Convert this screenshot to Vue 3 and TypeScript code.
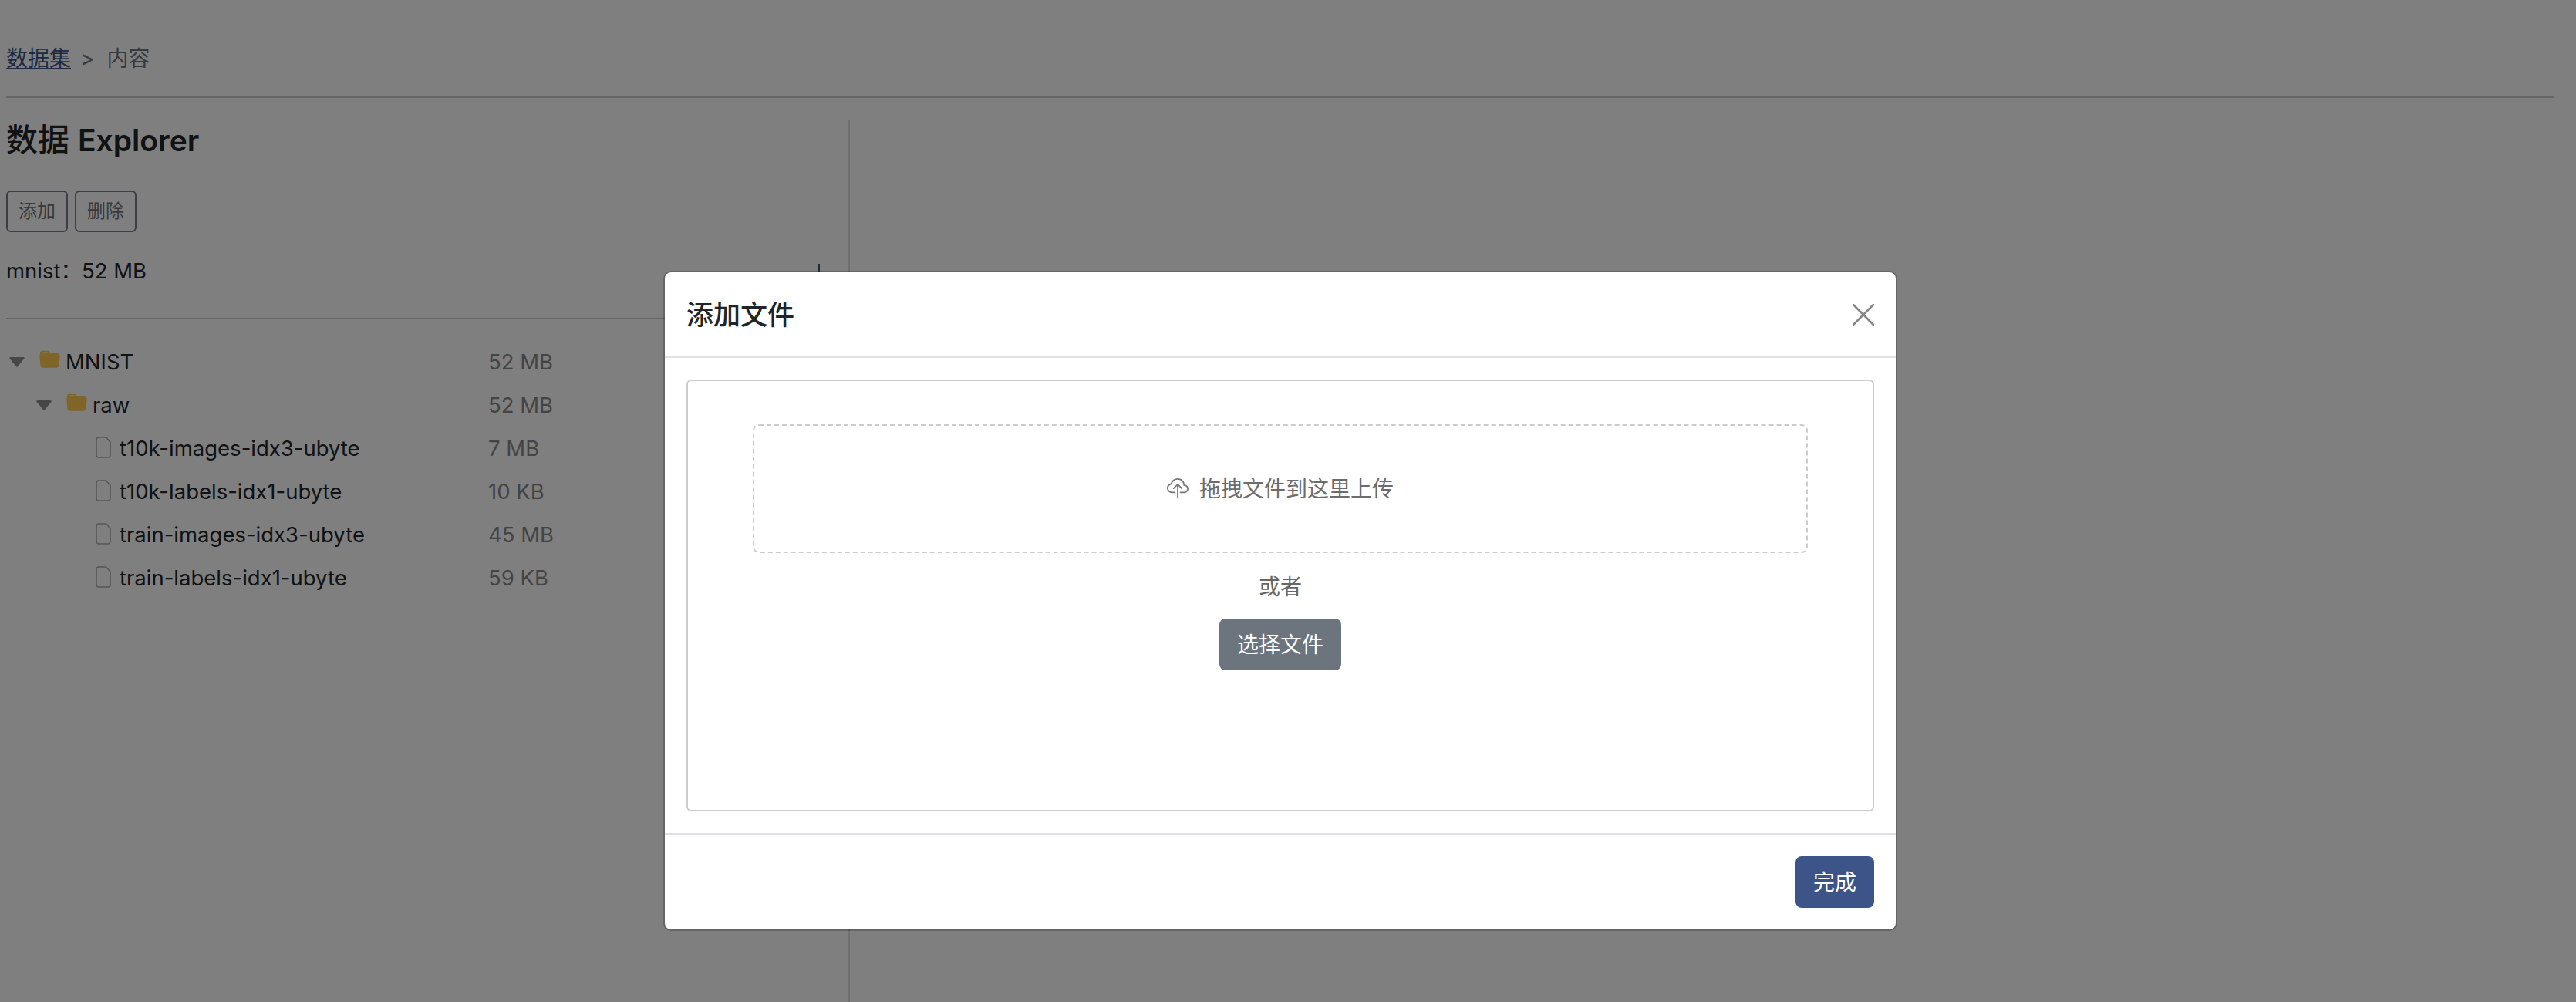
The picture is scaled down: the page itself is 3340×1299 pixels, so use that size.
<script setup lang="ts">
interface TreeRow {
  name: string
  size: string
  level: number
  kind: 'folder' | 'file'
}

const rows: TreeRow[] = [
  { name: 'MNIST', size: '52 MB', level: 0, kind: 'folder' },
  { name: 'raw', size: '52 MB', level: 1, kind: 'folder' },
  { name: 't10k-images-idx3-ubyte', size: '7 MB', level: 2, kind: 'file' },
  { name: 't10k-labels-idx1-ubyte', size: '10 KB', level: 2, kind: 'file' },
  { name: 'train-images-idx3-ubyte', size: '45 MB', level: 2, kind: 'file' },
  { name: 'train-labels-idx1-ubyte', size: '59 KB', level: 2, kind: 'file' },
]
</script>

<template>
  <div class="page">
    <nav class="crumbs">
      <a class="crumb-link" href="#">数据集</a>
      <span class="crumb-sep">&gt;</span>
      <span>内容</span>
    </nav>
    <div class="rule"></div>
    <div class="explorer">
      <section class="panel">
        <h1 class="title">数据 <span class="title-latin">Explorer</span></h1>
        <div class="actions">
          <button class="btn-outline" type="button">添加</button>
          <button class="btn-outline" type="button">删除</button>
        </div>
        <div class="stats">
          <span>mnist：52 MB</span>
          <span class="tick"></span>
        </div>
        <div class="panel-rule"></div>
        <ul class="tree">
          <li v-for="row in rows" :key="row.name" class="tree-row">
            <div class="tree-name" :style="{ paddingLeft: row.level * 35 + 'px' }">
              <span class="caret-slot">
                <svg v-if="row.kind === 'folder'" class="caret" viewBox="0 0 20 13">
                  <path d="M1.5 0h17a1.2 1.2 0 0 1 .9 2l-8.500 10.300a1.200 1.200 0 0 1-1.800 0L.600 2a1.200 1.200 0 0 1 .9-2z" />
                </svg>
              </span>
              <span class="icon-slot">
                <svg v-if="row.kind === 'folder'" class="folder" viewBox="0 0 16 16">
                  <path d="M9.828 3h3.982a2 2 0 0 1 1.992 2.181l-.637 7A2 2 0 0 1 13.174 14H2.825a2 2 0 0 1-1.991-1.819l-.637-7a1.990 1.990 0 0 1 .342-1.310L.5 3a2 2 0 0 1 2-2h3.672a2 2 0 0 1 1.414.586l.828.828A2 2 0 0 0 9.828 3zm-8.322.120C1.720 3.042 1.950 3 2.190 3h5.396l-.707-.707A1 1 0 0 0 6.172 2H2.500a1 1 0 0 0-1 .981l.006.139z" />
                </svg>
                <svg v-else class="file" viewBox="0 0 20 28">
                  <path d="M4 1h9.500L19 7v17a3 3 0 0 1-3 3H4a3 3 0 0 1-3-3V4a3 3 0 0 1 3-3z" />
                </svg>
              </span>
              <span>{{ row.name }}</span>
            </div>
            <div class="tree-size">{{ row.size }}</div>
          </li>
        </ul>
      </section>
    </div>

    <div class="overlay">
      <div class="modal">
        <header class="modal-header">
          <h2 class="modal-title">添加文件</h2>
          <svg class="close" viewBox="0 0 28 28">
            <path d="M1 1l26 26M27 1L1 27" />
          </svg>
        </header>
        <div class="modal-body">
          <div class="upload-box">
            <div class="dropzone">
              <svg class="cloud" viewBox="0 0 16 16">
                <path d="M4.406 1.342A5.530 5.530 0 0 1 8 0c2.690 0 4.923 2 5.166 4.579C14.758 4.804 16 6.137 16 7.773 16 9.569 14.502 11 12.687 11H10a.5.5 0 0 1 0-1h2.688C13.979 10 15 8.988 15 7.773c0-1.216-1.020-2.228-2.313-2.228h-.5v-.5C12.188 2.825 10.328 1 8 1a4.530 4.530 0 0 0-2.941 1.100c-.757.652-1.153 1.438-1.153 2.055v.448l-.445.049C2.064 4.805 1 5.952 1 7.318 1 8.785 2.230 10 3.781 10H6a.5.5 0 0 1 0 1H3.781C1.708 11 0 9.366 0 7.318c0-1.763 1.266-3.223 2.942-3.593.143-.863.698-1.723 1.464-2.383z" />
                <path d="M7.646 4.146a.5.5 0 0 1 .708 0l3 3a.5.5 0 0 1-.708.708L8.500 5.707V14.500a.5.5 0 0 1-1 0V5.707L5.354 7.854a.5.5 0 1 1-.708-.708l3-3z" />
              </svg>
              <span>拖拽文件到这里上传</span>
            </div>
            <div class="or">或者</div>
            <button class="btn-select" type="button">选择文件</button>
          </div>
        </div>
        <footer class="modal-footer">
          <button class="btn-done" type="button">完成</button>
        </footer>
      </div>
    </div>
  </div>
</template>

<style>
html,
body {
  margin: 0;
  background: #fff;
}
</style>

<style scoped>
.page {
  position: relative;
  box-sizing: border-box;
  height: 1299px;
  overflow: hidden;
  padding: 55px 28px 0 8px;
  background: #fff;
  color: #212529;
  font-family: Inter, "Noto Sans CJK SC", "Liberation Sans", sans-serif;
  font-size: 28px;
  line-height: 42px;
}
.crumbs {
  display: flex;
  gap: 12px;
  color: #6c757d;
}
.crumb-link {
  color: #3c5487;
  text-decoration: underline;
}
.crumb-sep {
  padding-right: 4px;
}
.rule {
  height: 2px;
  margin-top: 28px;
  background: #ccc;
}
.explorer {
  display: flex;
  height: 1144px;
  margin-top: 28px;
}
.panel {
  box-sizing: border-box;
  width: 1094px;
  border-right: 2px solid #dedede;
}
.title {
  margin: 1px 0 0;
  font-size: 41px;
  font-weight: 500;
  line-height: 50px;
}
.title-latin {
  font-size: 39px;
  font-weight: 600;
}
.actions {
  display: flex;
  gap: 9px;
  margin-top: 40px;
}
.btn-outline {
  box-sizing: border-box;
  width: 80px;
  height: 54px;
  padding: 0;
  border: 2px solid #767d84;
  border-radius: 6px;
  background: transparent;
  color: #6c757d;
  font: inherit;
  font-size: 24px;
  line-height: 50px;
}
.stats {
  display: flex;
  justify-content: space-between;
  height: 42px;
  margin-top: 29px;
  font-size: 27.5px;
}
.tick {
  width: 2px;
  height: 30px;
  margin: 12px 37px 0 0;
  background: #3c5487;
}
.panel-rule {
  height: 2px;
  margin-top: 40px;
  background: #ccc;
}
.tree {
  margin: 27px 0 0;
  padding: 0;
  font-size: 27.5px;
  list-style: none;
}
.tree-row {
  display: flex;
  align-items: center;
  height: 56px;
}
.tree-name {
  display: flex;
  align-items: center;
  box-sizing: border-box;
  width: 621px;
  margin-left: 4px;
}
.tree-size {
  color: #888;
}
.caret-slot {
  display: flex;
  flex: none;
  width: 39px;
}
.caret {
  width: 20px;
  height: 13px;
  fill: #8f8f8f;
}
.icon-slot {
  display: flex;
  flex: none;
  justify-content: center;
  width: 26px;
  margin-right: 8px;
  margin-top: -5px;
}
.folder {
  flex: none;
  width: 27px;
  height: 27px;
  fill: #ffcc50;
}
.file {
  flex: none;
  width: 20px;
  height: 28px;
  margin-top: 3px;
  fill: none;
  stroke: #adadad;
  stroke-width: 1.6;
}
.overlay {
  position: absolute;
  inset: 0;
  display: flex;
  align-items: flex-start;
  justify-content: center;
  box-sizing: border-box;
  padding: 351px 20px 0 0;
  background: rgba(0, 0, 0, 0.5);
}
.modal {
  box-sizing: border-box;
  width: 1600px;
  height: 856px;
  border: 2px solid rgba(0, 0, 0, 0.2);
  border-radius: 10px;
  background: #fff;
  background-clip: padding-box;
}
.modal-header {
  display: flex;
  align-items: center;
  justify-content: space-between;
  box-sizing: border-box;
  height: 111px;
  padding: 0 28px;
  border-bottom: 2px solid #dee2e6;
}
.modal-title {
  margin: 0;
  font-size: 35px;
  font-weight: 500;
  line-height: 42px;
}
.close {
  width: 28px;
  height: 28px;
  fill: none;
  stroke: #868686;
  stroke-width: 2.6;
  stroke-linecap: round;
}
.modal-body {
  box-sizing: border-box;
  height: 616px;
  padding: 28px;
}
.upload-box {
  display: flex;
  flex-direction: column;
  align-items: center;
  box-sizing: border-box;
  height: 560px;
  padding: 56px 84px 0;
  border: 2px solid #ccc;
  border-radius: 6px;
}
.dropzone {
  display: flex;
  align-items: center;
  justify-content: center;
  gap: 14px;
  box-sizing: border-box;
  width: 100%;
  height: 167px;
  border: 2px dashed #ccc;
  border-radius: 8px;
  color: #6c6c6c;
}
.cloud {
  width: 28px;
  height: 28px;
  fill: #777;
}
.or {
  margin-top: 23px;
  color: #666;
}
.btn-select,
.btn-done {
  box-sizing: border-box;
  height: 67px;
  padding: 0;
  border: none;
  border-radius: 8px;
  color: #fff;
  font: inherit;
}
.btn-select {
  width: 158px;
  margin-top: 20px;
  background: #6c757d;
}
.modal-footer {
  display: flex;
  justify-content: flex-end;
  box-sizing: border-box;
  height: 125px;
  padding: 28px 28px 0;
  border-top: 2px solid #dee2e6;
}
.btn-done {
  width: 102px;
  background: #3c5487;
}
</style>
